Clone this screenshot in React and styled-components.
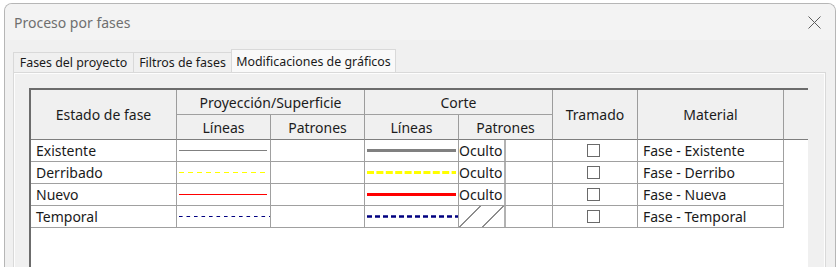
import React from 'react';
import styled, { createGlobalStyle } from 'styled-components';

const GlobalStyle = createGlobalStyle`
  html, body { margin: 0; padding: 0; overflow: hidden; background: #fff; }
  body { font-family: "Noto Sans", "Liberation Sans", sans-serif; }
  #root { width: 837px; height: 267px; }
`;

const Window = styled.div`
  box-sizing: border-box;
  margin: 3px 0 0 4px;
  width: 832px;
  height: 272px;
  border: 1px solid #b6b6b6;
  border-bottom: none;
  border-radius: 8px 8px 0 0;
  background: #f0f0f0;
  overflow: hidden;
  display: flex;
  flex-direction: column;
`;

const TitleBar = styled.div`
  height: 36px;
  flex: none;
  background: #f3f3f3;
  display: flex;
  align-items: center;
  justify-content: space-between;
  padding: 0 14px 0 9px;
`;

const Title = styled.span`
  font-size: 14px;
  color: #6f6f6f;
`;

const TabStrip = styled.div`
  height: 32px;
  flex: none;
  display: flex;
  align-items: flex-end;
  padding-left: 8px;
`;

const Tab = styled.div`
  box-sizing: border-box;
  width: ${p => p.$w}px;
  height: ${p => (p.$active ? 23 : 20)}px;
  margin-right: -1px;
  border: 1px solid #d9d9d9;
  border-bottom: none;
  background: ${p => (p.$active ? '#f9f9f9' : '#f0f0f0')};
  display: flex;
  align-items: center;
  justify-content: center;
  font-size: 12.4px;
  color: #1a1a1a;
  white-space: nowrap;
  position: relative;
  z-index: ${p => (p.$active ? 1 : 0)};
`;

const Panel = styled.div`
  flex: 1;
  margin: 0 9px 0 8px;
  border: 1px solid #d9d9d9;
  border-bottom: none;
  background: #f0f0f0;
  box-shadow: inset 1px 1px 0 #fdfdfd, inset -1px 0 0 #fdfdfd;
  padding: 15px 17px 0 15px;
`;

const Grid = styled.div`
  box-sizing: border-box;
  width: 779px;
  height: 200px;
  display: grid;
  grid-template-columns: 146px 94px 94px 94px 94px 85px 146px 24px;
  grid-template-rows: 25px 25px repeat(4, 22px);
  align-content: start;
  background: #fff;
  border-left: 2px solid #6c6c6c;
  border-top: 2px solid #6c6c6c;
  font-size: 14px;
`;

const HeadCell = styled.div`
  box-sizing: border-box;
  grid-column: ${p => p.$col};
  grid-row: ${p => p.$row};
  background: #f0f0f0;
  border-right: ${p => (p.$noRight ? 'none' : '1px solid #9c9c9c')};
  border-bottom: 1px solid ${p => (p.$dark ? '#7e7e7e' : '#a0a0a0')};
  display: flex;
  align-items: center;
  justify-content: center;
  color: #1c1c1c;
  white-space: nowrap;
`;

const Cell = styled.div`
  box-sizing: border-box;
  border-right: 1px solid #a0a0a0;
  border-bottom: 1px solid #a0a0a0;
  display: flex;
  align-items: center;
  justify-content: ${p => p.$center ? 'center' : 'flex-start'};
  padding-left: ${p => p.$pad || 0}px;
  padding-right: ${p => p.$padRight || 0}px;
  color: #1a1a1a;
  white-space: nowrap;
  overflow: hidden;
`;

const PatternLabel = styled.div`
  width: 45px;
  height: 100%;
  display: flex;
  align-items: center;
  color: #1a1a1a;
  font-weight: 400;
  flex: none;
`;

const PatternDivider = styled.div`
  width: 2px;
  height: 100%;
  background: #b2b2b2;
  flex: none;
`;

const Check = styled.div`
  box-sizing: border-box;
  width: 13px;
  height: 13px;
  border: 1px solid #6a6a6a;
  background: #fff;
`;

function LineSample({ color, width, dash, end }) {
  return (
    <svg width="93" height="21" style={{ display: 'block' }}>
      <line x1="2" y1="10.5" x2={end} y2="10.5" stroke={color} strokeWidth={width} strokeDasharray={dash || undefined} />
    </svg>
  );
}

function Hatch() {
  return (
    <svg width="45" height="21" style={{ display: 'block' }}>
      <line x1="0.5" y1="21" x2="21.5" y2="0" stroke="#000" strokeWidth="0.9" />
      <line x1="23.5" y1="21" x2="44.5" y2="0" stroke="#000" strokeWidth="0.9" />
    </svg>
  );
}

function CloseIcon() {
  return (
    <svg width="13" height="13" viewBox="0 0 13 13">
      <path d="M0.5 0.5 L12.5 12.5 M12.5 0.5 L0.5 12.5" stroke="#5c5c5c" strokeWidth="1" fill="none" />
    </svg>
  );
}

const rows = [
  { name: 'Existente', proj: { color: '#808080', width: 1, end: 90 }, cut: { color: '#808080', width: 3, end: 91 }, pattern: 'Oculto', material: 'Fase - Existente' },
  { name: 'Derribado', proj: { color: '#ffff00', width: 1, dash: '5 4', end: 90 }, cut: { color: '#ffff00', width: 3, dash: '7 2.4', end: 91 }, pattern: 'Oculto', material: 'Fase - Derribo' },
  { name: 'Nuevo', proj: { color: '#ff0000', width: 1, end: 90 }, cut: { color: '#ff0000', width: 3, end: 91 }, pattern: 'Oculto', material: 'Fase - Nueva' },
  { name: 'Temporal', proj: { color: '#000080', width: 1, dash: '3.6 3.9', end: 93 }, cut: { color: '#000080', width: 2.5, dash: '5 3', end: 93 }, pattern: null, material: 'Fase - Temporal' },
];

const tabs = [
  { label: 'Fases del proyecto', w: 121 },
  { label: 'Filtros de fases', w: 99 },
  { label: 'Modificaciones de gráficos', w: 165, active: true },
];

export default function App() {
  return (
    <>
      <GlobalStyle />
      <Window>
        <TitleBar>
          <Title>Proceso por fases</Title>
          <CloseIcon />
        </TitleBar>
        <TabStrip>
          {tabs.map(t => (
            <Tab key={t.label} $w={t.w} $active={t.active}>{t.label}</Tab>
          ))}
        </TabStrip>
        <Panel>
          <Grid>
            <HeadCell $col="1" $row="1 / span 2" $dark>Estado de fase</HeadCell>
            <HeadCell $col="2 / span 2" $row="1">Proyección/Superficie</HeadCell>
            <HeadCell $col="4 / span 2" $row="1">Corte</HeadCell>
            <HeadCell $col="6" $row="1 / span 2" $dark>Tramado</HeadCell>
            <HeadCell $col="7" $row="1 / span 2" $dark>Material</HeadCell>
            <HeadCell $col="8" $row="1 / span 2" $dark $noRight />
            <HeadCell $col="2" $row="2" $dark>Líneas</HeadCell>
            <HeadCell $col="3" $row="2" $dark>Patrones</HeadCell>
            <HeadCell $col="4" $row="2" $dark>Líneas</HeadCell>
            <HeadCell $col="5" $row="2" $dark>Patrones</HeadCell>
            {rows.map(r => (
              <React.Fragment key={r.name}>
                <Cell $pad={5}>{r.name}</Cell>
                <Cell><LineSample {...r.proj} /></Cell>
                <Cell />
                <Cell><LineSample {...r.cut} /></Cell>
                <Cell>
                  <PatternLabel>{r.pattern ? r.pattern : <Hatch />}</PatternLabel>
                  <PatternDivider />
                </Cell>
                <Cell $center $padRight={3}><Check /></Cell>
                <Cell $pad={5}>{r.material}</Cell>
                <div />
              </React.Fragment>
            ))}
          </Grid>
        </Panel>
      </Window>
    </>
  );
}
